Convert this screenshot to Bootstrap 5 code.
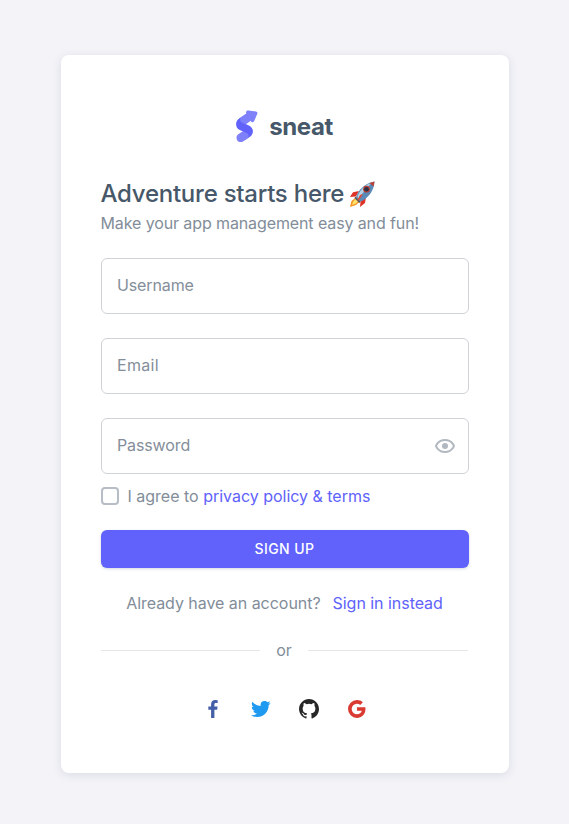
<!DOCTYPE html>
<html lang="en">
<head>
<meta charset="utf-8">
<meta name="viewport" content="width=device-width, initial-scale=1">
<title>Sneat - Sign up</title>
<link href="https://cdn.jsdelivr.net/npm/bootstrap@5.3.0/dist/css/bootstrap.min.css" rel="stylesheet">
<style>
body{font-family:Inter,"Open Sans",sans-serif;background:#f3f3f8;color:#828d99;font-size:16px;line-height:24px;letter-spacing:0}
.auth-page{height:824px;padding-top:55px}
.auth-card{width:448px;height:718px;border:0;border-radius:8px;padding:50px 40px 0;box-shadow:0 2px 10px rgba(50,71,92,.12)}
.brand-row{height:43px}
.brand-name{font-size:24px;font-weight:700;color:#465869;letter-spacing:-.4px;line-height:37px;margin-top:3px}
.auth-title{font-size:24px;font-weight:500;line-height:32px;color:#465869;letter-spacing:-.25px;padding-top:6px}
.rocket{margin-left:5px}
.subtitle{letter-spacing:-.11px;margin:1px 0 23px}
.field{height:56px;border:1px solid #cfd2d7;border-radius:6px;padding:0 15.5px 2px;font-size:16px;color:#465869;letter-spacing:-.12px}
.field::placeholder{color:#848e9a;opacity:1}
.field-email{letter-spacing:.3px}
.eye-btn{right:12px;top:16px;line-height:0;color:#b1b8c0}
.agree-row{margin:10px 0 22px}
.agree-box{width:18px;height:18px;border:2px solid #b7bdc4!important;border-radius:4px!important;margin:0 9px 0 0;flex:none}
.agree-text .brand-link{letter-spacing:-.02px}
.brand-link{color:#6062fb;text-decoration:none}
.btn-signup{--bs-btn-bg:#6062fb;--bs-btn-hover-bg:#5557e0;--bs-btn-color:#fff;--bs-btn-hover-color:#fff;height:38px;border:0;border-radius:6px;font-size:14px;font-weight:500;line-height:24px;padding:7px;letter-spacing:.4px;box-shadow:0 1px 3px rgba(50,71,92,.2)}
.account-row{margin-top:23px;gap:12px;letter-spacing:-.04px}
.or-row{margin-top:23px;margin-right:1px}
.rule{height:1px;background:#e4e6e8}
.socials{margin-top:35px}
</style>
</head>
<body>
<main class="auth-page d-flex justify-content-center align-items-start">
<div class="card auth-card">
  <div class="d-flex justify-content-center align-items-start brand-row">
    <svg class="me-2 flex-shrink-0" width="25" height="38" viewBox="0.6 0.6 27 41.4">
      <defs><path id="ribbon" d="M13.79.36 3.4 7.44C.57 9.69-.38 12.48.56 15.8c.13.43.54 1.99 2.56 3.43.69.49 2.2 1.15 4.53 1.99l-.05.03-4.97 3.3C.45 26.3.09 28.51 1.56 31.17c1.28 1.65 3.65 2.09 5.53 1.37 1.26-.48 4.37-2.54 9.33-6.17 1.61-1.87 2.28-3.92 1.99-6.13-.45-2.71-2.23-4.66-5.36-5.87l-2.13-.9 7.7-5.49z"/><path id="tip" d="m20.6 7.13 5 6.67A2 2 0 0 1 24 17H14a2 2 0 0 1-1.6-3.2l5-6.67a2 2 0 0 1 3.2 0z"/><clipPath id="clip"><use href="#ribbon"/></clipPath></defs>
      <g transform="translate(0.4 8)"><use href="#ribbon" fill="#6062fb"/>
      <g clip-path="url(#clip)" fill="#fff" fill-opacity=".2"><path d="M5.47 6C4.05 8.22 4.36 10.07 6.4 11.57c2.21 1 3.7 1.65 4.46 1.94l4.65.92 3.11-6.45L13.79.36z"/><path d="m7.5 21.23 4.82 2.09c1.85 1.44 2.08 3.17.69 5.19s-2.7 3.28-3.93 3.79L4.13 34 0 31.16c-.56-3.34-.56-5.1 0-5.28.84-.27 2.78-3.06 3.3-3.35.35-.2 1.75-.63 4.2-1.3z"/></g></g>
      <g transform="translate(0.4 0) rotate(60 19 11)"><use href="#tip" fill="#6062fb"/><use href="#tip" fill="#fff" fill-opacity=".2"/></g>
    </svg>
    <span class="brand-name">sneat</span>
  </div>
  <h1 class="auth-title mb-0 mt-4 d-flex align-items-center"><span>Adventure starts here</span>
    <svg class="rocket" width="28" height="28" viewBox="0 0 28 28"><path d="M10 11 4 12.3.9 17l6-.4zM17 17l-1 6-5 4 .6-6z" fill="#df3328"/><path d="m7.5 17-5 4L1 27l6-2 4.5-4z" fill="#f69322"/><path d="m7 18-3 4-1 3 4-1.5L10 20z" fill="#ffe36c"/><path d="M7 17c2.3-7 8.3-13.5 18.5-15.5C25 11 19 18.5 11.5 21.5z" fill="#5a8bb8"/><path d="M8.5 16C11.6 9.5 16 5 22 3.3 18 8.6 13.5 13.5 9 18.5z" fill="#b6d3e7"/><path d="m20.5 2.9 5-1.4-1 5.1z" fill="#bc3f37"/><path d="m6.5 16.7 5.2 5-1.4 1.2-5-4.8z" fill="#4d596b"/><circle cx="17.5" cy="9.2" r="3.4" fill="#b94034"/><circle cx="17.5" cy="9.2" r="2.3" fill="#253248"/><path d="m14 14-4 6-2 1 3-6z" fill="#e54732"/></svg>
  </h1>
  <p class="subtitle">Make your app management easy and fun!</p>
  <form class="d-flex flex-column">
    <input class="form-control field mb-4" placeholder="Username" aria-label="Username">
    <input class="form-control field field-email mb-4" type="email" placeholder="Email" aria-label="Email">
    <div class="position-relative"><input class="form-control field" type="password" placeholder="Password" aria-label="Password">
      <span class="position-absolute eye-btn"><svg width="24" height="24" fill="currentColor" viewBox="0 0 24 24"><circle cx="12" cy="12" r="3"/><path d="M12 5c-7.633 0-9.927 6.617-9.948 6.684L1.946 12l.105.316C2.073 12.383 4.367 19 12 19s9.927-6.617 9.948-6.684l.106-.316-.105-.316C21.927 11.617 19.633 5 12 5zm0 12c-5.351 0-7.424-3.846-7.926-5C4.578 10.842 6.652 7 12 7c5.351 0 7.424 3.846 7.926 5-.504 1.158-2.578 5-7.926 5z"/></svg></span></div>
    <label class="d-flex align-items-center agree-row"><input class="form-check-input agree-box" type="checkbox"><span class="agree-text">I agree to <a class="brand-link" href="#">privacy policy &amp; terms</a></span></label>
    <button class="btn btn-signup w-100" type="button">SIGN UP</button>
  </form>
  <div class="d-flex justify-content-center account-row"><span>Already have an account?</span><a class="brand-link" href="#">Sign in instead</a></div>
  <div class="d-flex align-items-center gap-3 or-row"><div class="rule flex-grow-1"></div><span>or</span><div class="rule flex-grow-1"></div></div>
  <div class="d-flex justify-content-center gap-4 socials">
    <svg width="24" height="24" viewBox="0 0 24 24" fill="#4460a8"><path d="M13.397 20.997v-8.196h2.765l.411-3.209h-3.176V7.548c0-.926.258-1.56 1.587-1.56h1.684V3.127A22.336 22.336 0 0 0 14.201 3c-2.444 0-4.122 1.492-4.122 4.231v2.355H7.332v3.209h2.753v8.202h3.312z"/></svg>
    <svg width="24" height="24" viewBox="0 0 24 24" fill="#1f9af0"><path d="M19.633 7.997c.013.175.013.349.013.523 0 5.325-4.053 11.461-11.46 11.461-2.282 0-4.402-.661-6.186-1.809.324.037.636.05.973.05a8.07 8.07 0 0 0 5.001-1.721 4.036 4.036 0 0 1-3.767-2.793c.249.037.499.062.761.062.361 0 .724-.05 1.061-.137a4.027 4.027 0 0 1-3.23-3.953v-.05c.537.299 1.16.486 1.82.511a4.022 4.022 0 0 1-1.796-3.354c0-.748.199-1.434.548-2.032a11.457 11.457 0 0 0 8.306 4.215c-.062-.3-.1-.611-.1-.923a4.026 4.026 0 0 1 4.028-4.028c1.16 0 2.207.486 2.943 1.272a7.957 7.957 0 0 0 2.556-.973 4.02 4.02 0 0 1-1.771 2.22 8.073 8.073 0 0 0 2.319-.624 8.645 8.645 0 0 1-2.019 2.083z"/></svg>
    <svg width="24" height="24" viewBox="0 0 24 24" fill="#272727"><path d="M12.026 2c-5.509 0-9.974 4.465-9.974 9.974 0 4.406 2.857 8.145 6.821 9.465.499.09.679-.217.679-.481 0-.237-.008-.865-.011-1.696-2.775.602-3.361-1.338-3.361-1.338-.452-1.152-1.107-1.459-1.107-1.459-.905-.619.069-.605.069-.605 1.002.07 1.527 1.028 1.527 1.028.89 1.524 2.336 1.084 2.902.829.091-.645.351-1.085.635-1.334-2.214-.251-4.542-1.107-4.542-4.93 0-1.087.389-1.979 1.024-2.675-.101-.253-.446-1.268.099-2.64 0 0 .837-.269 2.742 1.021a9.582 9.582 0 0 1 2.496-.336 9.554 9.554 0 0 1 2.496.336c1.906-1.291 2.742-1.021 2.742-1.021.545 1.372.203 2.387.099 2.64.64.696 1.024 1.587 1.024 2.675 0 3.833-2.33 4.675-4.552 4.922.355.308.675.916.675 1.846 0 1.334-.012 2.41-.012 2.737 0 .267.178.577.687.479C19.146 20.115 22 16.379 22 11.974 22 6.465 17.535 2 12.026 2z"/></svg>
    <svg width="24" height="24" viewBox="0 0 24 24" fill="#d93a31"><path d="M20.283 10.356h-8.327v3.451h4.792c-.446 2.193-2.313 3.453-4.792 3.453a5.27 5.27 0 0 1-5.279-5.28 5.27 5.27 0 0 1 5.279-5.279c1.259 0 2.397.447 3.29 1.178l2.6-2.599c-1.584-1.381-3.615-2.233-5.89-2.233a8.908 8.908 0 0 0-8.934 8.934 8.907 8.907 0 0 0 8.934 8.934c4.467 0 8.529-3.249 8.529-8.934 0-.528-.081-1.097-.202-1.625z"/></svg>
  </div>
</div>
</main>
<script src="https://cdn.jsdelivr.net/npm/bootstrap@5.3.0/dist/js/bootstrap.bundle.min.js"></script>
</body>
</html>
